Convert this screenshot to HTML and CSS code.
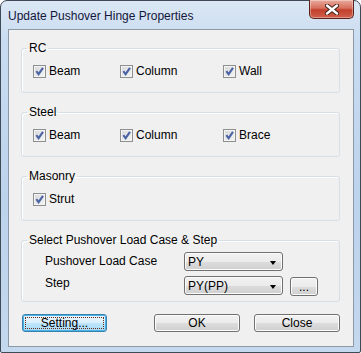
FILE: index.html
```html
<!DOCTYPE html>
<html lang="en">
<head>
  <meta charset="UTF-8" />
  <title>Update Pushover Hinge Properties</title>
  <link rel="stylesheet" href="styles.css">
</head>
<body>

<div class="window">
  <div class="titlebar">
    <span class="title">Update Pushover Hinge Properties</span>
    <span class="close-x">
      <svg width="14" height="11" viewBox="0 0 14 11">
        <path d="M2 1.5 L12 9.5 M12 1.5 L2 9.5" stroke="#3a1c16" stroke-width="4.2" stroke-linecap="round" />
        <path d="M2 1.5 L12 9.5 M12 1.5 L2 9.5" stroke="#fff" stroke-width="2.4" stroke-linecap="round" />
      </svg>
    </span>
  </div>

  <div class="client">
    <fieldset class="group">
      <legend>RC</legend>
      <div class="checks">
        <label class="check"><span class="box"></span>Beam</label>
        <label class="check"><span class="box"></span>Column</label>
        <label class="check"><span class="box"></span>Wall</label>
      </div>
    </fieldset>

    <fieldset class="group">
      <legend>Steel</legend>
      <div class="checks">
        <label class="check"><span class="box"></span>Beam</label>
        <label class="check"><span class="box"></span>Column</label>
        <label class="check"><span class="box"></span>Brace</label>
      </div>
    </fieldset>

    <fieldset class="group">
      <legend>Masonry</legend>
      <div class="checks">
        <label class="check"><span class="box"></span>Strut</label>
      </div>
    </fieldset>

    <fieldset class="group">
      <legend>Select Pushover Load Case &amp; Step</legend>
      <div class="load">
        <div class="row">
          <span class="lbl">Pushover Load Case</span>
          <span class="combo">PY<span class="arrow"></span></span>
        </div>
        <div class="row">
          <span class="lbl lbl-top">Step</span>
          <span class="combo">PY(PP)<span class="arrow"></span></span>
          <span class="btn dots">...</span>
        </div>
      </div>
    </fieldset>

    <div class="buttons">
      <span class="btn default"><span class="focus">Setting...</span></span>
      <span class="spacer"></span>
      <span class="btn wide">OK</span>
      <span class="btn wide">Close</span>
    </div>
  </div>
</div>

</body>
</html>
```

FILE: styles.css
```css
body {
  margin: 0;
  background: #fff;
  font-family: "Liberation Sans", Arial, sans-serif;
  font-size: 12px;
  color: #000;
}

/* window frame */
.window {
  box-sizing: border-box;
  width: 361px;
  height: 353px;
  border: 1px solid #3e4a56;
  border-radius: 7px 7px 2px 2px;
  padding: 0 6px 5px 7px;
  background: linear-gradient(to bottom, #dbe7f4 0, #c9dcf1 40px, #bcd3ec 200px, #c4d8ee 100%);
  position: relative;
  display: flex;
  flex-direction: column;
}

.titlebar {
  height: 28px;
  flex: none;
  display: flex;
  align-items: center;
}

.title {
  color: #14163a;
  font-size: 12px;
  margin-top: 2px;
}

.close-x {
  position: absolute;
  top: -1px;
  right: 6px;
  width: 45px;
  height: 19px;
  box-sizing: border-box;
  border: 1px solid #5b2219;
  border-top: none;
  border-radius: 0 0 5px 5px;
  background: linear-gradient(to bottom, #e9a99b 0, #d7705e 45%, #c2402b 55%, #d0604a 100%);
  display: flex;
  align-items: center;
  justify-content: center;
  box-shadow: inset 0 0 0 1px rgba(255,255,255,0.35);
}

/* client area */
.client {
  flex: 1;
  border: 1px solid #8b98a6;
  background: #f0f0f0;
  padding: 12px 13px 12px 12px;
  display: flex;
  flex-direction: column;
  gap: 12px;
}

.group {
  margin: 0;
  border: 1px solid #d5dfe5;
  border-radius: 3px;
  box-shadow: inset 1px 1px 0 #fff;
  padding: 0;
}

.group + .group {
  margin-top: 1px;
}

.group legend {
  line-height: 12px;
  padding: 0 2px;
  margin-left: 5px;
}

.checks {
  display: grid;
  grid-template-columns: 87px 103px auto;
  height: 13px;
  padding: 11px 11px 14px 11px;
}

.check {
  display: flex;
  align-items: center;
  gap: 3px;
  line-height: 13px;
}

.box {
  width: 13px;
  height: 13px;
  box-sizing: border-box;
  border: 1px solid #8e8f8f;
  background:
    url("data:image/svg+xml;utf8,<svg xmlns='http://www.w3.org/2000/svg' width='11' height='11'><path d='M2.3 5.2 L4.6 8.2 L9 1.8' fill='none' stroke='%234a64a6' stroke-width='2.1'/></svg>") center / 11px 11px no-repeat,
    linear-gradient(135deg, #d8d8d8, #f4f4f4);
  box-shadow: inset 0 0 0 1px #f4f4f4;
}

/* load case group */
.load {
  padding: 6px 0 6px 23px;
}

.row {
  display: flex;
  align-items: center;
  height: 19px;
}

.row + .row {
  margin-top: 5px;
}

.lbl {
  width: 139px;
  margin-top: -1px;
}

.lbl-top {
  margin-top: -5px;
}

.combo {
  box-sizing: border-box;
  width: 99px;
  height: 19px;
  border: 1px solid #707070;
  border-radius: 3px;
  background: linear-gradient(to bottom, #f2f2f2 0, #ebebeb 50%, #dddddd 51%, #cfcfcf 100%);
  box-shadow: inset 0 0 0 1px #fcfcfc;
  padding-left: 3px;
  display: flex;
  align-items: center;
  justify-content: space-between;
  padding-right: 6px;
}

.arrow {
  width: 0;
  height: 0;
  border-left: 3.5px solid transparent;
  border-right: 3.5px solid transparent;
  border-top: 4px solid #000;
  margin-top: 2px;
}

/* push buttons */
.btn {
  box-sizing: border-box;
  height: 18px;
  border: 1px solid #707070;
  border-radius: 3px;
  background: linear-gradient(to bottom, #f2f2f2 0, #ebebeb 50%, #dddddd 51%, #cfcfcf 100%);
  box-shadow: inset 0 0 0 1px #fcfcfc;
  display: flex;
  align-items: center;
  justify-content: center;
}

.dots {
  width: 28px;
  height: 19px;
  margin-left: 7px;
  align-items: flex-end;
  line-height: 12px;
  padding-bottom: 2px;
  margin-top: 1px;
}

.buttons {
  display: flex;
  gap: 14px;
}

.spacer {
  flex: 1;
}

.wide {
  width: 86px;
}

.default {
  width: 85px;
  margin-left: 1px;
  border-color: #3c7fb1;
  background: linear-gradient(to bottom, #eaf6fd 0, #d9f0fc 50%, #bee6fd 51%, #a7d9f5 100%);
  box-shadow: inset 0 0 0 1px #48b3e4;
  padding: 2px;
}

.focus {
  flex: 1;
  align-self: stretch;
  border: 1px dotted #6b2a18;
  display: flex;
  align-items: center;
  justify-content: center;
}
```
